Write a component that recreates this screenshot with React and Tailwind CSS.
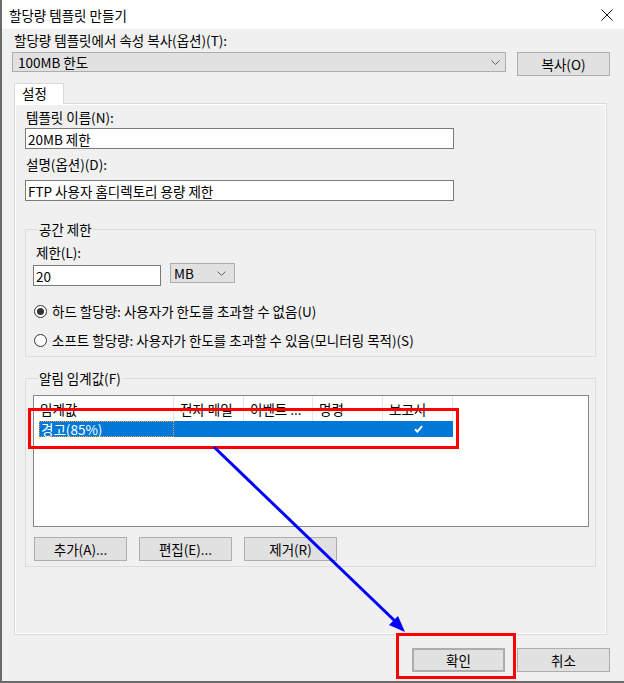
import React from "react";

const Chevron = () => (
  <svg width="9" height="5" viewBox="0 0 9 5" className="shrink-0">
    <polyline points="0.5,0.5 4.5,4.5 8.5,0.5" fill="none" stroke="#606060" strokeWidth="1" />
  </svg>
);

const Button = ({ children, className = "" }) => (
  <div
    className={`h-[24px] w-[93px] bg-[#e1e1e1] border border-[#adadad] flex items-center justify-center ${className}`}
  >
    {children}
  </div>
);

const Radio = ({ checked, label }) => (
  <div className="flex items-center h-[16px] ml-[1px]">
    <div className="w-[13px] h-[13px] rounded-full border border-[#333333] bg-white flex items-center justify-center shrink-0">
      {checked && <div className="w-[7px] h-[7px] rounded-full bg-[#333333]" />}
    </div>
    <span className="ml-[5px] whitespace-nowrap">{label}</span>
  </div>
);

const columns = [
  { name: "임계값", w: "w-[140px]" },
  { name: "전자 메일", w: "w-[70px]" },
  { name: "이벤트 ...", w: "w-[69px]" },
  { name: "명령", w: "w-[70px]" },
  { name: "보고서", w: "w-[70px]" },
];

const App = () => {
  return (
    <div className="relative w-[624px] h-[683px] overflow-hidden text-[13.5px] leading-[16px] text-black font-['Noto_Sans_CJK_KR','Noto_Sans',sans-serif]">
      {/* window */}
      <div className="w-full h-full bg-[#f0f0f0] border-l-2 border-b-2 border-[#6b6b6b] flex flex-col">
        {/* title bar */}
        <div className="h-[29px] bg-white flex items-center justify-between pl-[7px] pr-[11px] shrink-0">
          <span>할당량 템플릿 만들기</span>
          <svg width="12" height="12" viewBox="0 0 12 12">
            <path d="M0.5 0.5 L11.5 11.5 M11.5 0.5 L0.5 11.5" stroke="#111" strokeWidth="1" />
          </svg>
        </div>

        {/* copy from template */}
        <div className="pt-[3px] pl-[12px]">할당량 템플릿에서 속성 복사(옵션)(T):</div>
        <div className="mt-[4px] pl-[10px] flex items-start">
          <div className="w-[494px] h-[20px] bg-[#e1e1e1] border border-[#adadad] flex items-center justify-between pl-[5px] pr-[5px]">
            <span>100MB 한도</span>
            <Chevron />
          </div>
          <Button className="ml-[11px] w-[92px]">복사(O)</Button>
        </div>

        {/* tab */}
        <div className="mt-[7px] ml-[12px] w-[50px] h-[21px] -mb-px relative z-10 bg-white border border-b-0 border-[#d9d9d9] pl-[7px] pt-[1px]">
          설정
        </div>

        {/* tab panel */}
        <div className="ml-[12px] w-[593px] h-[532px] border border-[#d9d9d9] shadow-[inset_0_0_0_1px_#ffffff] pl-[10px] flex flex-col">
          <div className="mt-[5px] ml-[1px]">템플릿 이름(N):</div>
          <div className="mt-[3px] w-[429px] h-[21px] bg-white border border-[#7a7a7a] flex items-center pl-[2px]">
            20MB 제한
          </div>
          <div className="mt-[7px] ml-[1px]">설명(옵션)(D):</div>
          <div className="mt-[8px] w-[429px] h-[21px] bg-white border border-[#7a7a7a] flex items-center pl-[2px]">
            FTP 사용자 홈디렉토리 용량 제한
          </div>

          {/* space limit */}
          <fieldset className="mt-[20px] w-[571px] border border-[#dcdcdc] pl-[7px] pb-[8px]">
            <legend className="ml-[5px] px-[1px] leading-[16px]">공간 제한</legend>
            <div className="pt-[7px] ml-[3px]">제한(L):</div>
            <div className="mt-[3px] flex items-start">
              <div className="mt-[2px] w-[128px] h-[21px] bg-white border border-[#7a7a7a] flex items-center pl-[2px]">
                20
              </div>
              <div className="ml-[9px] w-[65px] h-[20px] bg-[#e1e1e1] border border-[#adadad] flex items-center justify-between pl-[3px] pr-[8px]">
                <span>MB</span>
                <Chevron />
              </div>
            </div>
            <div className="mt-[17px]">
              <Radio checked label="하드 할당량: 사용자가 한도를 초과할 수 없음(U)" />
            </div>
            <div className="mt-[13px]">
              <Radio label="소프트 할당량: 사용자가 한도를 초과할 수 있음(모니터링 목적)(S)" />
            </div>
          </fieldset>

          {/* notification thresholds */}
          <fieldset className="mt-[13px] w-[571px] border border-[#dcdcdc] pl-[7px] pb-[5px]">
            <legend className="ml-[5px] px-[1px] leading-[16px]">알림 임계값(F)</legend>
            <div className="mt-[9px] w-[556px] h-[132px] bg-white border border-[#828790] flex flex-col">
              <div className="h-[25px] flex">
                {columns.map((c) => (
                  <div key={c.name} className={`${c.w} h-full border-r border-[#e5e5e5] flex items-center pl-[6px] whitespace-nowrap overflow-hidden`}>
                    {c.name}
                  </div>
                ))}
              </div>
              <div className="ml-[5px] w-[414px] h-[16px] bg-[#0078d7] text-white flex">
                <div className="w-[135px] h-full border border-dotted border-[#f5a040] flex items-center pl-[1px]">
                  경고(85%)
                </div>
                <div className="w-[70px]" />
                <div className="w-[69px]" />
                <div className="w-[70px]" />
                <div className="w-[70px] flex items-center justify-center">
                  <svg width="9" height="8" viewBox="0 0 9 8">
                    <path d="M1 4.2 L3.4 6.6 L8 1.2" fill="none" stroke="#ffffff" strokeWidth="2" />
                  </svg>
                </div>
              </div>
            </div>
            <div className="mt-[10px] ml-[1px] flex gap-[12px]">
              <Button>추가(A)...</Button>
              <Button>편집(E)...</Button>
              <Button>제거(R)</Button>
            </div>
          </fieldset>
        </div>

        {/* dialog buttons */}
        <div className="mt-[13px] flex justify-end gap-[12px] pr-[14px]">
          <Button className="border-2 border-[#0078d7]">확인</Button>
          <Button>취소</Button>
        </div>
      </div>

      {/* annotations */}
      <div className="absolute left-[28px] top-[408px] w-[431px] h-[41px] border-[3px] border-[#ff0000] pointer-events-none" />
      <div className="absolute left-[396px] top-[633px] w-[120px] h-[46px] border-[3px] border-[#ff0000] pointer-events-none" />
      <svg className="absolute left-0 top-0 pointer-events-none" width="624" height="683" viewBox="0 0 624 683">
        <line x1="214" y1="447" x2="396" y2="622" stroke="#0000ff" strokeWidth="3" />
        <polygon points="405,632 389,625 398,616" fill="#0000ff" />
      </svg>
    </div>
  );
};

export default App;
